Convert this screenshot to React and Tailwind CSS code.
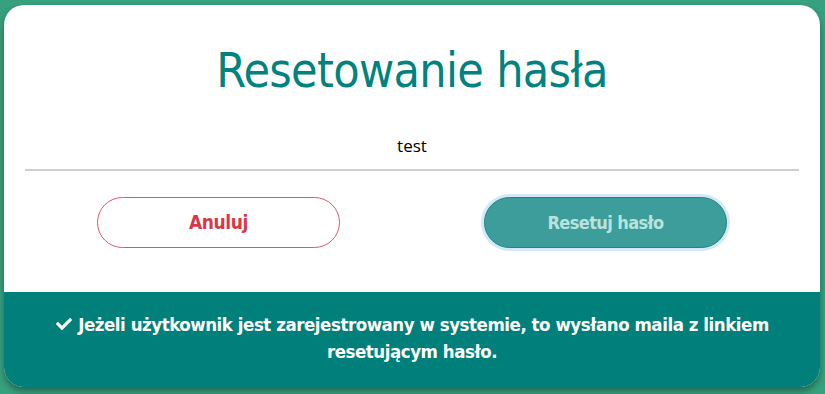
import React from "react";

const condensed = { fontFamily: '"Liberation Sans Narrow", "DejaVu Sans Condensed", "Roboto Condensed", "Liberation Sans", sans-serif' };

export default function App() {
  return (
    <div className="w-[825px] h-[394px] bg-[#37a07e] pt-[5px] pl-[4px] pr-[5px] pb-[7px]">
      <div className="h-[382px] rounded-[20px] bg-white overflow-hidden flex flex-col shadow-[0_4px_6px_rgba(0,0,0,0.35)]">
        <div className="flex-1 flex flex-col">
          <h1
            className="text-center text-[#00827f] text-[48px] leading-none mt-[41px] tracking-[-0.7px]"
            style={condensed}
          >
            Resetowanie hasła
          </h1>
          <div className="mx-[21px] mt-[36px] border-b-2 border-[#cfcfcf] h-[41px] flex items-center justify-center">
            <span className="text-[17px] text-black pb-[7px]" style={{ fontFamily: '"Open Sans", sans-serif' }}>test</span>
          </div>
          <div className="flex justify-between mt-[26px] pl-[93px] pr-[93px]">
            <button
              className="w-[243px] h-[51px] rounded-full border border-[#e0566d] text-[#dc3545] font-bold text-[19px] tracking-[-0.4px]"
              style={condensed}
            >
              Anuluj
            </button>
            <button
              className="w-[243px] h-[51px] rounded-full bg-[#3d9d9b] border border-[#1f8581] text-[#b9e3dd] font-bold text-[18px] tracking-[-0.6px] shadow-[0_0_0_3px_#d5e8f8]"
              style={condensed}
            >
              Resetuj hasło
            </button>
          </div>
        </div>
        <div
          className="h-[95px] bg-[#007f7b] flex flex-col items-center justify-center text-white font-bold text-[18.5px] tracking-[-0.45px] leading-[27px] text-center pb-[4px]"
          style={condensed}
        >
          <div className="flex items-center gap-[5px]">
            <svg width="18" height="16" viewBox="0 0 512 512" fill="white">
              <path d="M173.9 439.4l-166.4-166.4c-10-10-10-26.2 0-36.2l36.2-36.2c10-10 26.2-10 36.2 0L192 312.7 432.1 72.6c10-10 26.2-10 36.2 0l36.2 36.2c10 10 10 26.2 0 36.2l-294.4 294.4c-10 10-26.2 10-36.2 0z" />
            </svg>
            <span>Jeżeli użytkownik jest zarejestrowany w systemie, to wysłano maila z linkiem</span>
          </div>
          <div>resetującym hasło.</div>
        </div>
      </div>
    </div>
  );
}
